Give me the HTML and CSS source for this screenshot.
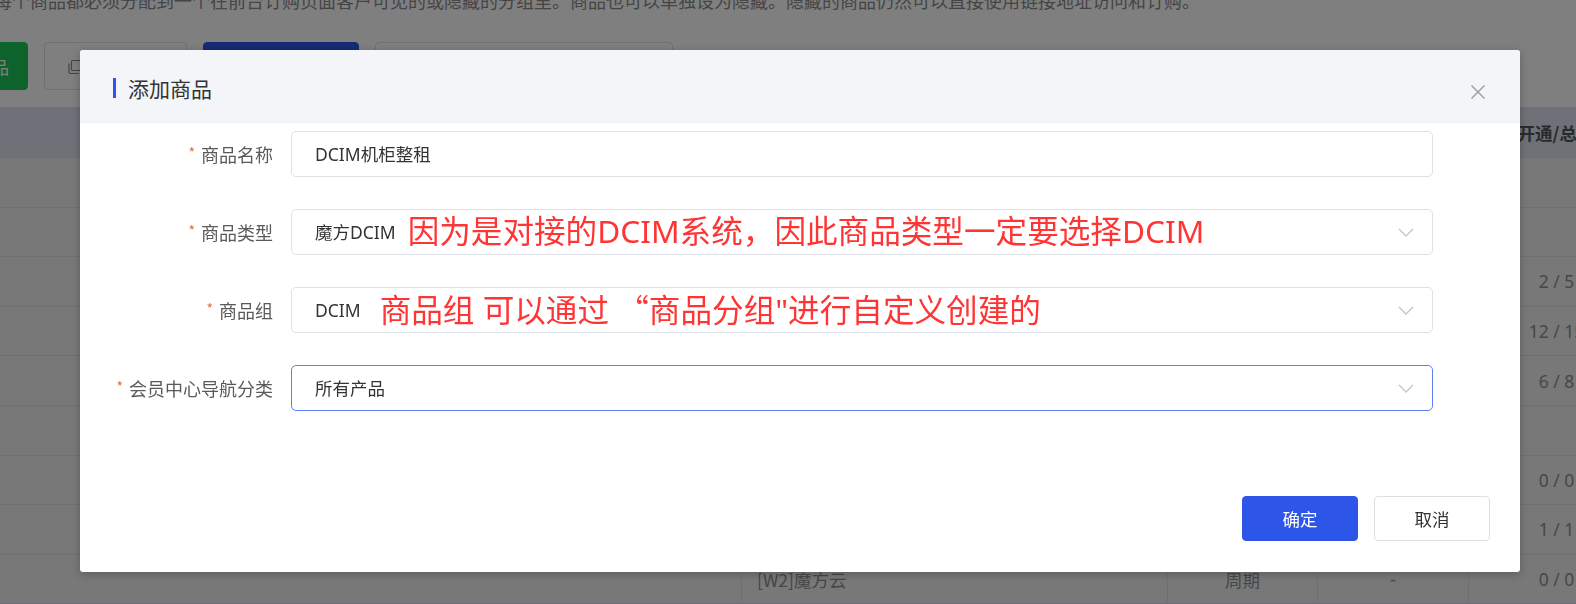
FILE: index.html
```html
<!DOCTYPE html>
<html lang="zh-CN">
<head>
<meta charset="utf-8">
<title>添加商品</title>
<link rel="stylesheet" href="styles.css">
</head>
<body>
<div class="page">
  <p class="notice">每个商品都必须分配到一个在前台订购页面客户可见的或隐藏的分组里。商品也可以单独设为隐藏。隐藏的商品仍然可以直接使用链接地址访问和订购。</p>
  <div class="toolbar">
    <button class="tb-btn tb-green">新建商品</button>
    <button class="tb-btn tb-outline tb-copy">
      <svg class="copy-ico" width="14" height="14" viewBox="0 0 14 14"><rect x="3.5" y="0.5" width="10" height="10" rx="1.5" fill="none" stroke="#888" stroke-width="1.2"/><path d="M1 3.5v8.5a1.5 1.5 0 0 0 1.5 1.5H11" fill="none" stroke="#888" stroke-width="1.2"/></svg>
    </button>
    <button class="tb-btn tb-blue"></button>
    <div class="tb-search"></div>
  </div>
  <div class="table">
    <div class="tr thead">
      <div class="td"></div><div class="td"></div><div class="td"></div><div class="td"></div><div class="td">开通/总数</div>
    </div>
    <div class="tr"><div class="td"></div><div class="td"></div><div class="td"></div><div class="td"></div><div class="td"></div></div>
    <div class="tr"><div class="td"></div><div class="td"></div><div class="td"></div><div class="td"></div><div class="td"></div></div>
    <div class="tr"><div class="td"></div><div class="td"></div><div class="td"></div><div class="td"></div><div class="td">2 / 5</div></div>
    <div class="tr"><div class="td"></div><div class="td"></div><div class="td"></div><div class="td"></div><div class="td">12 / 15</div></div>
    <div class="tr"><div class="td"></div><div class="td"></div><div class="td"></div><div class="td"></div><div class="td">6 / 8</div></div>
    <div class="tr"><div class="td"></div><div class="td"></div><div class="td"></div><div class="td"></div><div class="td"></div></div>
    <div class="tr"><div class="td"></div><div class="td"></div><div class="td"></div><div class="td"></div><div class="td">0 / 0</div></div>
    <div class="tr"><div class="td"></div><div class="td"></div><div class="td"></div><div class="td"></div><div class="td">1 / 1</div></div>
    <div class="tr"><div class="td"></div><div class="td name">[W2]魔方云</div><div class="td">周期</div><div class="td">-</div><div class="td">0 / 0</div></div>
  </div>
</div>

<div class="mask"></div>

<div class="modal">
  <div class="modal-head">
    <span class="head-bar"></span>
    <span class="modal-title">添加商品</span>
    <svg class="close" width="16" height="16" viewBox="0 0 16 16"><path d="M1.5 1.5L14.5 14.5M14.5 1.5L1.5 14.5" stroke="#9a9a9a" stroke-width="1.4" fill="none"/></svg>
  </div>
  <div class="form">
    <div class="label"><span class="star">*</span>商品名称</div>
    <div class="field"><span class="value">DCIM机柜整租</span></div>

    <div class="label"><span class="star">*</span>商品类型</div>
    <div class="field">
      <span class="value">魔方DCIM<span class="note note-1">因为是对接的DCIM系统，因此商品类型一定要选择DCIM</span></span>
      <svg class="chev" width="16" height="9" viewBox="0 0 16 9"><path d="M1 1l7 7 7-7" fill="none" stroke="#c3c6cf" stroke-width="1.4"/></svg>
    </div>

    <div class="label"><span class="star">*</span>商品组</div>
    <div class="field">
      <span class="value">DCIM<span class="note note-2">商品组 可以通过 <span class="cjk">“</span>商品分组"进行自定义创建的</span></span>
      <svg class="chev" width="16" height="9" viewBox="0 0 16 9"><path d="M1 1l7 7 7-7" fill="none" stroke="#c3c6cf" stroke-width="1.4"/></svg>
    </div>

    <div class="label"><span class="star">*</span>会员中心导航分类</div>
    <div class="field focus">
      <span class="value">所有产品</span>
      <svg class="chev" width="16" height="9" viewBox="0 0 16 9"><path d="M1 1l7 7 7-7" fill="none" stroke="#c3c6cf" stroke-width="1.4"/></svg>
    </div>
  </div>
  <div class="modal-foot">
    <button class="btn btn-primary">确定</button>
    <button class="btn btn-default">取消</button>
  </div>
</div>
</body>
</html>
```

FILE: styles.css
```css
html, body {
  margin: 0;
  padding: 0;
}
body {
  width: 1576px;
  height: 604px;
  overflow: hidden;
  background: #ffffff;
  font-family: "Noto Sans", "Noto Sans CJK SC", sans-serif;
  font-size: 17.5px;
  color: #333;
}
.page {
  margin-top: -12px;
}
.notice {
  margin: 0 0 0 -6px;
  line-height: 24px;
  font-size: 18px;
  color: #8a8a8a;
  white-space: nowrap;
  font-family: "Noto Sans CJK SC", sans-serif;
}
.toolbar {
  display: flex;
  gap: 16px;
  margin-top: 30px;
  margin-left: -90px;
  height: 48px;
}
.tb-btn {
  height: 48px;
  box-sizing: border-box;
  border-radius: 4px;
  font-family: "Noto Sans CJK SC", sans-serif;
  font-size: 17.5px;
  display: flex;
  align-items: center;
  padding: 0;
  margin: 0;
}
.tb-green {
  width: 118px;
  background: #1dc65a;
  border: 1px solid #1dc65a;
  color: #fff;
  justify-content: flex-end;
  padding-right: 18px;
}
.tb-outline {
  width: 143px;
  background: #fff;
  border: 1px solid #dcdfe6;
  color: #555;
  padding-left: 23px;
  gap: 8px;
}
.copy-ico {
  margin-top: 2px;
}
.tb-blue {
  width: 156px;
  background: #2d55e8;
  border: 1px solid #2d55e8;
  color: #fff;
  justify-content: center;
}
.tb-search {
  width: 298px;
  height: 48px;
  box-sizing: border-box;
  border: 1px solid #dcdfe6;
  border-radius: 4px;
  background: #fff;
}
.table {
  margin-top: 17px;
  width: 1644px;
}
.tr {
  display: grid;
  grid-template-columns: 741px 426px 150px 151px 176px;
  height: 49.6px;
  box-sizing: border-box;
  border-bottom: 1px solid #dfe0ea;
  background: #f1f1f2;
}
.tr .td {
  display: flex;
  align-items: center;
  justify-content: center;
  color: #8e8e8e;
  font-size: 17.5px;
  white-space: nowrap;
}
.tr .td + .td {
  border-left: 1px solid #dfe0ea;
}
.tr .td.name {
  justify-content: flex-start;
  padding-left: 15px;
  font-family: "Noto Sans CJK SC", sans-serif;
}
.thead {
  height: 51px;
  background: #dce2f0;
  border-bottom: none;
}
.thead .td {
  color: #555;
  font-weight: bold;
  font-family: "Noto Sans CJK SC", sans-serif;
}
.thead .td + .td {
  border-left: none;
}

.mask {
  position: fixed;
  inset: 0;
  background: rgba(0, 0, 0, 0.5);
}

.modal {
  position: fixed;
  left: 80px;
  top: 50px;
  width: 1440px;
  height: 522px;
  background: #fff;
  border-radius: 3px;
  box-shadow: 0 2px 10px rgba(0, 0, 0, 0.25);
  overflow: hidden;
}
.modal-head {
  height: 73px;
  box-sizing: border-box;
  padding: 3px 34px 0 33px;
  background: #f4f5f9;
  border-bottom: 1px solid #eceef4;
  display: flex;
  align-items: center;
}
.head-bar {
  width: 3px;
  height: 20px;
  background: #2d55e8;
}
.modal-title {
  margin-left: 12px;
  font-family: "Noto Sans CJK SC", sans-serif;
  font-size: 21px;
  line-height: 28px;
  color: #333;
}
.close {
  margin-left: auto;
  margin-top: 8px;
}
.form {
  display: grid;
  grid-template-columns: 193px 1fr;
  column-gap: 18px;
  row-gap: 32px;
  padding: 8px 87px 0 0;
}
.label {
  display: flex;
  align-items: center;
  justify-content: flex-end;
  height: 46px;
  font-family: "Noto Sans CJK SC", sans-serif;
  font-size: 18px;
  color: #5a5a5a;
}
.star {
  color: #f0683c;
  font-size: 14px;
  margin-right: 6px;
  margin-bottom: 5px;
}
.field {
  height: 46px;
  box-sizing: border-box;
  border: 1px solid #dfe1e8;
  border-radius: 5px;
  display: flex;
  align-items: center;
  padding: 0 18px 0 23px;
  font-size: 17.5px;
  color: #333;
}
.field.focus {
  border-color: #5b7ff5;
}
.value {
  flex: 1;
  display: flex;
  align-items: center;
  white-space: nowrap;
  line-height: 24px;
}
.note {
  color: #ff3535;
  font-size: 31.6px;
  line-height: 36px;
  margin-bottom: 3px;
}
.note .cjk {
  font-family: "Noto Sans CJK SC", sans-serif;
}
.note-1 {
  margin-left: 12px;
}
.note-2 {
  margin-left: 19px;
}
.chev {
  flex: none;
}
.modal-foot {
  display: flex;
  justify-content: flex-end;
  gap: 16px;
  padding: 85px 30px 0 0;
}
.btn {
  width: 116px;
  height: 45px;
  box-sizing: border-box;
  border-radius: 4px;
  font-family: "Noto Sans CJK SC", sans-serif;
  font-size: 17.5px;
  margin: 0;
  padding: 0;
}
.btn-primary {
  background: #2d55e8;
  border: 1px solid #2d55e8;
  color: #fff;
}
.btn-default {
  background: #fff;
  border: 1px solid #dcdfe6;
  color: #333;
}
```
